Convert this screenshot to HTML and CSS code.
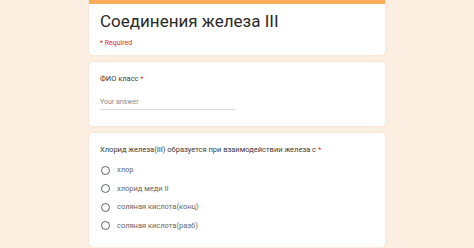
FILE: index.html
```html
<!DOCTYPE html>
<html lang="ru">
<head>
    <meta charset="UTF-8">
    <meta name="viewport" content="width=device-width, initial-scale=1.0">
    <title>Соединения железа III</title>
    <link rel="stylesheet" href="styles.css">
</head>
<body>
    <div class="container">
        <!-- Заголовок формы -->
        <div class="card header-card">
            <h1>Соединения железа III</h1>
            <div class="required">* Required</div>
        </div>

        <!-- Текстовый вопрос -->
        <div class="card">
            <div class="question">ФИО класс <span class="star">*</span></div>
            <div class="answer">Your answer</div>
        </div>

        <!-- Вопрос с вариантами -->
        <div class="card">
            <div class="question">Хлорид железа(III) образуется при взаимодействии железа с <span class="star">*</span></div>
            <div class="options">
                <label class="option"><span class="radio"></span>хлор</label>
                <label class="option"><span class="radio"></span>хлорид меди II</label>
                <label class="option"><span class="radio"></span>соляная кислота(конц)</label>
                <label class="option"><span class="radio"></span>соляная кислота(разб)</label>
            </div>
        </div>
    </div>
</body>
</html>
```

FILE: styles.css
```css
body {
    font-family: Roboto, Arial, sans-serif;
    margin: 0;
    padding: 0;
    background-color: #fcefe2;
    color: #202124;
}
.container {
    width: 296px;
    margin: 0 auto;
    display: flex;
    flex-direction: column;
    gap: 7px;
}
.card {
    background: #fff;
    border-radius: 4px;
    padding: 11px 11px 16px;
    box-shadow: 0 0 2px rgba(230, 200, 170, 0.6);
}
.header-card {
    border-top: 4px solid #f8ac5c;
    border-radius: 0 0 4px 4px;
    padding-top: 7px;
    padding-bottom: 12px;
    height: 32px;
}
h1 {
    font-family: Roboto, sans-serif;
    font-weight: 400;
    font-size: 17px;
    line-height: 20px;
    color: #2a2a2a;
    margin: 0;
}
.required {
    color: #d93025;
    font-size: 7px;
    margin-top: 8px;
}
.question {
    font-size: 7.5px;
    line-height: 12px;
    color: #3a3a3a;
}
.star {
    color: #d93025;
}
.answer {
    width: 135px;
    margin-top: 13px;
    font-size: 7px;
    color: #8a8a8a;
    padding-bottom: 3px;
    border-bottom: 1px solid #e0e0e0;
}
.options {
    display: flex;
    flex-direction: column;
    gap: 8.5px;
    margin-top: 9px;
}
.option {
    display: flex;
    align-items: center;
    gap: 7px;
    font-size: 7.5px;
    color: #666;
    line-height: 10px;
    padding-left: 1px;
}
.radio {
    width: 7px;
    height: 7px;
    border: 1px solid #5f6368;
    border-radius: 50%;
}
```
